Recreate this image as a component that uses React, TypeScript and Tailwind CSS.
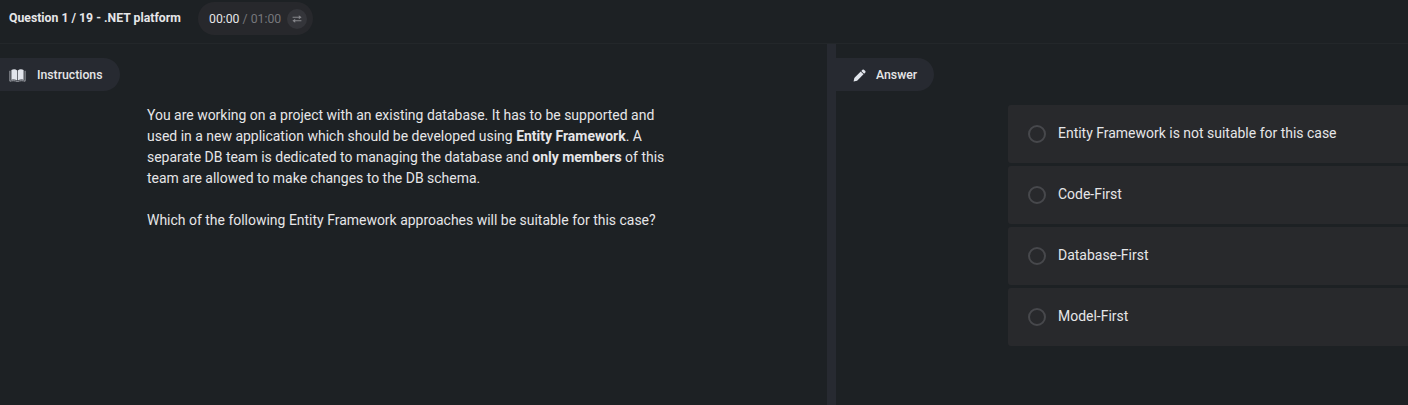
import React from "react";

const options: string[] = [
  "Entity Framework is not suitable for this case",
  "Code-First",
  "Database-First",
  "Model-First",
];

function BookIcon() {
  return (
    <svg width="17" height="13" viewBox="0 0 17 13" fill="#e2e5ec" className="mt-[2px] shrink-0">
      <path d="M2.4.9C4.5-.1 6.700.1 8.200 1.400V11.600C6.600 10.300 4.400 10.100 2.400 10.900Z" />
      <path d="M14.600.9C12.500-.1 10.300.1 8.800 1.400V11.600C10.400 10.300 12.600 10.100 14.600 10.900Z" />
      <path d="M.9 1.800V12.200C3.300 11.500 5.800 11.500 8.500 12.500C11.200 11.500 13.700 11.500 16.100 12.200V1.800" fill="none" stroke="#a0a3aa" strokeWidth="1" />
    </svg>
  );
}

function PencilIcon() {
  return (
    <svg width="13" height="13" viewBox="0 0 13 13" fill="#e2e5ec" className="mt-[2px] shrink-0">
      <path d="M.6 12.400L1.300 8.900L7.700 2.500L10.500 5.300L4.100 11.700Z" />
      <path d="M8.300 1.900L9.500.7Q10.200.1 10.900.7L12.300 2.100Q12.900 2.800 12.300 3.500L11.100 4.700Z" />
    </svg>
  );
}

function SwapIcon() {
  return (
    <svg width="10" height="8" viewBox="0 0 10 8" className="shrink-0">
      <path d="M.6 2.200H7.500M9.400 5.800H2.500" fill="none" stroke="#85868b" strokeWidth="1.100" />
      <path d="M6.800.2L9.600 2.200L6.800 4.200ZM3.200 3.800L.4 5.800L3.200 7.800Z" fill="#85868b" />
    </svg>
  );
}

export default function App() {
  return (
    <div className="flex h-[405px] w-full flex-col overflow-hidden bg-[#1d2124] font-['Roboto',sans-serif] text-[#e6e6e8]">
      <header className="flex h-[44px] shrink-0 items-start border-b border-[#23272a] pl-[9px]">
        <h1 className="mt-[9px] w-[189px] whitespace-nowrap text-[12.25px] leading-[18px] font-bold">
          Question 1 / 19 - .NET platform
        </h1>
        <div className="mt-[2px] flex h-[33px] w-[115px] items-center rounded-full bg-[#27282c] pl-[11px] text-[12.25px] whitespace-nowrap">
          <span className="mt-px w-[72px]">
            00:00 <span className="text-[#76777b]">/ 01:00</span>
          </span>
          <span className="ml-[6px] flex size-[20px] items-center justify-center rounded-full bg-[#34353a]">
            <SwapIcon />
          </span>
        </div>
      </header>
      <main className="flex min-h-0 flex-1">
        <section className="w-[827px] shrink-0 pt-[14px]">
          <div className="flex h-[33px] w-[120px] items-center gap-[11px] rounded-r-full bg-[#272a31] pl-[9px] text-[12.25px] font-medium">
            <BookIcon />
            <span className="mt-px">Instructions</span>
          </div>
          <div className="mt-[14px] ml-[147px] w-[530px] text-[13.970px] leading-[21px]">
            <p>
              You are working on a project with an existing database. It has to be supported and
              <br />
              used in a new application which should be developed using <b>Entity Framework</b>. A
              <br />
              separate DB team is dedicated to managing the database and <b>only members</b> of this
              <br />
              team are allowed to make changes to the DB schema.
            </p>
            <p className="mt-[21px]">
              Which of the following Entity Framework approaches will be suitable for this case?
            </p>
          </div>
        </section>
        <div className="w-[9px] shrink-0 bg-[#272a31]" />
        <section className="min-w-0 flex-1 pt-[14px]">
          <div className="flex h-[33px] w-[98px] items-center gap-[10px] rounded-r-full bg-[#272a31] pl-[17px] text-[12.25px] font-medium">
            <PencilIcon />
            <span className="mt-px">Answer</span>
          </div>
          <ul className="mt-[14px] ml-[172px] flex flex-col gap-[3px]">
            {options.map((option) => (
              <li
                key={option}
                className="flex h-[58px] items-center gap-[12px] rounded-l-[3px] bg-[#28292c] pl-[20px] text-[13.970px] leading-[20px]"
              >
                <span className="-mt-px size-[18px] shrink-0 rounded-full border-2 border-[#47484c]" />
                <span className="-mt-[2px]">{option}</span>
              </li>
            ))}
          </ul>
        </section>
      </main>
    </div>
  );
}
